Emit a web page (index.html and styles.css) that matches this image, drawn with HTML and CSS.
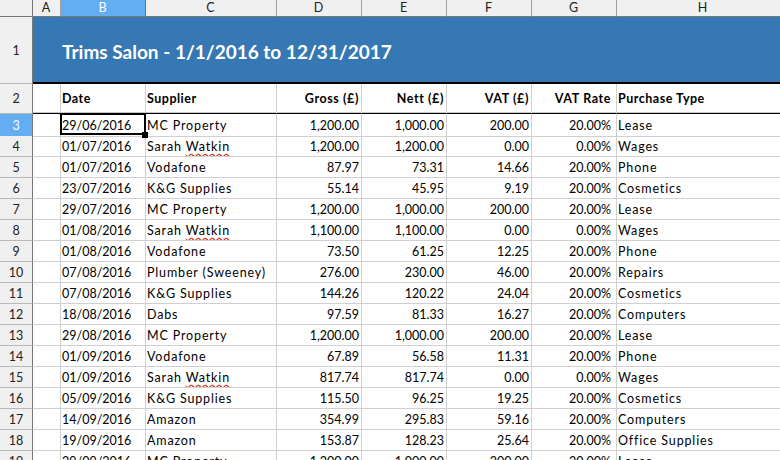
FILE: index.html
```html
<!DOCTYPE html>
<html lang="en">
<head>
  <meta charset="UTF-8" />
  <title>Trims Salon - Purchases</title>
  <link rel="stylesheet" href="styles.css">
</head>
<body>
  <div class="sheet">
    <div class="row colhead">
      <div class="corner"></div>
      <div>A</div>
      <div class="on">B</div>
      <div>C</div>
      <div>D</div>
      <div>E</div>
      <div>F</div>
      <div>G</div>
      <div>H</div>
    </div>

    <div class="row title-row">
      <div class="rn">1</div>
      <div class="title">Trims Salon - 1/1/2016 to 12/31/2017</div>
    </div>

    <div class="row head-row">
      <div class="rn">2</div>
      <div></div>
      <div class="t">Date</div>
      <div class="t">Supplier</div>
      <div class="n">Gross (£)</div>
      <div class="n">Nett (£)</div>
      <div class="n">VAT (£)</div>
      <div class="n pct">VAT Rate</div>
      <div class="t">Purchase Type</div>
    </div>

    <div class="row first">
      <div class="rn on">3</div>
      <div></div>
      <div class="cur">29/06/2016<span class="handle"></span></div>
      <div class="t">MC Property</div>
      <div class="n">1,200.00</div>
      <div class="n">1,000.00</div>
      <div class="n">200.00</div>
      <div class="n pct">20.00%</div>
      <div class="t">Lease</div>
    </div>
    <div class="row">
      <div class="rn">4</div>
      <div></div>
      <div>01/07/2016</div>
      <div class="t">Sarah <span class="sp">Watkin</span></div>
      <div class="n">1,200.00</div>
      <div class="n">1,200.00</div>
      <div class="n">0.00</div>
      <div class="n pct">0.00%</div>
      <div class="t">Wages</div>
    </div>
    <div class="row">
      <div class="rn">5</div>
      <div></div>
      <div>01/07/2016</div>
      <div class="t">Vodafone</div>
      <div class="n">87.97</div>
      <div class="n">73.31</div>
      <div class="n">14.66</div>
      <div class="n pct">20.00%</div>
      <div class="t">Phone</div>
    </div>
    <div class="row">
      <div class="rn">6</div>
      <div></div>
      <div>23/07/2016</div>
      <div class="t">K&amp;G Supplies</div>
      <div class="n">55.14</div>
      <div class="n">45.95</div>
      <div class="n">9.19</div>
      <div class="n pct">20.00%</div>
      <div class="t">Cosmetics</div>
    </div>
    <div class="row">
      <div class="rn">7</div>
      <div></div>
      <div>29/07/2016</div>
      <div class="t">MC Property</div>
      <div class="n">1,200.00</div>
      <div class="n">1,000.00</div>
      <div class="n">200.00</div>
      <div class="n pct">20.00%</div>
      <div class="t">Lease</div>
    </div>
    <div class="row">
      <div class="rn">8</div>
      <div></div>
      <div>01/08/2016</div>
      <div class="t">Sarah <span class="sp">Watkin</span></div>
      <div class="n">1,100.00</div>
      <div class="n">1,100.00</div>
      <div class="n">0.00</div>
      <div class="n pct">0.00%</div>
      <div class="t">Wages</div>
    </div>
    <div class="row">
      <div class="rn">9</div>
      <div></div>
      <div>01/08/2016</div>
      <div class="t">Vodafone</div>
      <div class="n">73.50</div>
      <div class="n">61.25</div>
      <div class="n">12.25</div>
      <div class="n pct">20.00%</div>
      <div class="t">Phone</div>
    </div>
    <div class="row">
      <div class="rn">10</div>
      <div></div>
      <div>07/08/2016</div>
      <div class="t">Plumber (Sweeney)</div>
      <div class="n">276.00</div>
      <div class="n">230.00</div>
      <div class="n">46.00</div>
      <div class="n pct">20.00%</div>
      <div class="t">Repairs</div>
    </div>
    <div class="row">
      <div class="rn">11</div>
      <div></div>
      <div>07/08/2016</div>
      <div class="t">K&amp;G Supplies</div>
      <div class="n">144.26</div>
      <div class="n">120.22</div>
      <div class="n">24.04</div>
      <div class="n pct">20.00%</div>
      <div class="t">Cosmetics</div>
    </div>
    <div class="row">
      <div class="rn">12</div>
      <div></div>
      <div>18/08/2016</div>
      <div class="t">Dabs</div>
      <div class="n">97.59</div>
      <div class="n">81.33</div>
      <div class="n">16.27</div>
      <div class="n pct">20.00%</div>
      <div class="t">Computers</div>
    </div>
    <div class="row">
      <div class="rn">13</div>
      <div></div>
      <div>29/08/2016</div>
      <div class="t">MC Property</div>
      <div class="n">1,200.00</div>
      <div class="n">1,000.00</div>
      <div class="n">200.00</div>
      <div class="n pct">20.00%</div>
      <div class="t">Lease</div>
    </div>
    <div class="row">
      <div class="rn">14</div>
      <div></div>
      <div>01/09/2016</div>
      <div class="t">Vodafone</div>
      <div class="n">67.89</div>
      <div class="n">56.58</div>
      <div class="n">11.31</div>
      <div class="n pct">20.00%</div>
      <div class="t">Phone</div>
    </div>
    <div class="row">
      <div class="rn">15</div>
      <div></div>
      <div>01/09/2016</div>
      <div class="t">Sarah <span class="sp">Watkin</span></div>
      <div class="n">817.74</div>
      <div class="n">817.74</div>
      <div class="n">0.00</div>
      <div class="n pct">0.00%</div>
      <div class="t">Wages</div>
    </div>
    <div class="row">
      <div class="rn">16</div>
      <div></div>
      <div>05/09/2016</div>
      <div class="t">K&amp;G Supplies</div>
      <div class="n">115.50</div>
      <div class="n">96.25</div>
      <div class="n">19.25</div>
      <div class="n pct">20.00%</div>
      <div class="t">Cosmetics</div>
    </div>
    <div class="row">
      <div class="rn">17</div>
      <div></div>
      <div>14/09/2016</div>
      <div class="t">Amazon</div>
      <div class="n">354.99</div>
      <div class="n">295.83</div>
      <div class="n">59.16</div>
      <div class="n pct">20.00%</div>
      <div class="t">Computers</div>
    </div>
    <div class="row">
      <div class="rn">18</div>
      <div></div>
      <div>19/09/2016</div>
      <div class="t">Amazon</div>
      <div class="n">153.87</div>
      <div class="n">128.23</div>
      <div class="n">25.64</div>
      <div class="n pct">20.00%</div>
      <div class="t">Office Supplies</div>
    </div>
    <div class="row">
      <div class="rn">19</div>
      <div></div>
      <div>29/09/2016</div>
      <div class="t">MC Property</div>
      <div class="n">1,200.00</div>
      <div class="n">1,000.00</div>
      <div class="n">200.00</div>
      <div class="n pct">20.00%</div>
      <div class="t">Lease</div>
    </div>
  </div>
</body>
</html>
```

FILE: styles.css
```css
html, body {
  margin: 0;
  overflow: hidden;
  background: #fff;
}
body {
  font-family: Lato, "Liberation Sans", sans-serif;
  font-size: 12.5px;
  color: #000;
}
.sheet {
  width: 790px;
}
.row {
  display: grid;
  grid-template-columns: 33px 28px 85px 131px 85px 85px 85px 85px 1fr;
  height: 21px;
  line-height: 20px;
}
.row > div {
  box-sizing: border-box;
  padding: 1px 2px 0 1px;
  white-space: nowrap;
  overflow: hidden;
  border-right: 1px solid #d0d0d0;
  border-bottom: 1px solid #d0d0d0;
}
/* text columns read wider than the figures */
.row > .t { letter-spacing: 0.85px; }
.row > .n { text-align: right; }
.row > .pct { padding-right: 5px; }

/* row numbers down the left */
.row > .rn {
  text-align: center;
  padding: 1px 0 0;
  background: #f0f0f0;
  color: #222;
  border-right: 1px solid #777;
  border-bottom: 1px solid #b8b8b8;
}
.row > .rn.on {
  background: #62aef0;
  color: #fff;
}

/* column letters */
.colhead { height: 17px; line-height: 16px; }
.colhead > div {
  text-align: center;
  padding-top: 0;
  background: #f0f0f0;
  color: #222;
  border-right: 1px solid #a0a0a0;
  border-bottom: 1px solid #777;
}
.colhead > .corner { border-right: 1px solid #777; }
.colhead > .on {
  background: #62aef0;
  color: #fff;
  border-right-color: #2d7fd0;
}

.title-row { height: 67px; line-height: 65px; }
.row > .title {
  grid-column: 2 / -1;
  background: #3678b4;
  color: #fff;
  font-size: 19px;
  font-weight: bold;
  padding: 4px 0 0 29px;
  line-height: 62px;
  border-right: none;
  border-bottom: 2px solid #000;
}

.head-row { height: 30px; line-height: 28px; }
.head-row > div {
  font-weight: bold;
  border-bottom: 1px solid #000;
  box-shadow: inset 0 -1px 0 #c8c8c8;
}
.head-row > .t { letter-spacing: 0.5px; }
.head-row > .n { letter-spacing: 0.6px; }
.head-row > .rn {
  font-weight: normal;
  box-shadow: none;
  border-bottom-color: #b8b8b8;
}

.first { height: 22px; line-height: 21px; }

/* active cell outline with its fill handle */
.cur { position: relative; overflow: visible !important; }
.cur::before {
  content: "";
  position: absolute;
  left: -1px;
  top: -1px;
  width: 86px;
  height: 22px;
  box-sizing: border-box;
  border: 2px solid #000;
}
.handle {
  position: absolute;
  left: 81px;
  top: 18px;
  width: 6px;
  height: 6px;
  background: #000;
  z-index: 2;
}

.sp {
  text-decoration: underline wavy #d8341c;
  text-decoration-skip-ink: none;
  text-underline-offset: 2px;
}
```
